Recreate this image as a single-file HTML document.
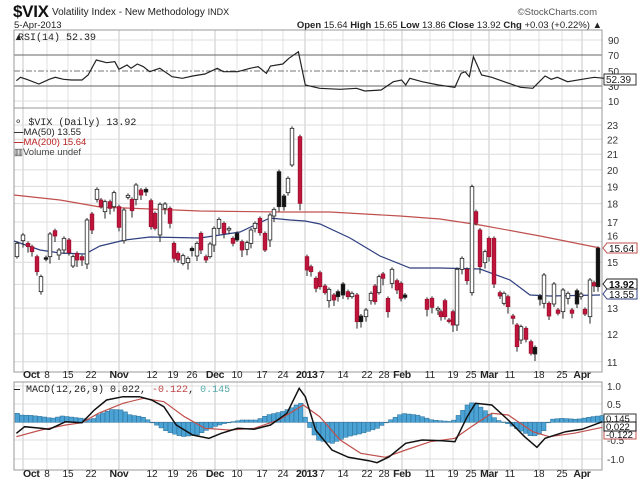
<!DOCTYPE html>
<html><head><meta charset="utf-8"><style>
html,body{margin:0;padding:0;background:#fff;width:640px;height:484px;overflow:hidden}
svg{display:block;font-family:"Liberation Sans",sans-serif}
</style></head><body>
<svg id="s" width="640" height="484" viewBox="0 0 640 484" xmlns="http://www.w3.org/2000/svg">
<text x="13" y="17" font-size="17" font-weight="bold" fill="#111" textLength="36">$VIX</text>
<text x="52" y="15" font-size="10" fill="#222">Volatility Index - New Methodology <tspan font-size="9">INDX</tspan></text>
<text x="597" y="15" font-size="9.5" fill="#555" text-anchor="end">©StockCharts.com</text>
<text x="14" y="28" font-size="9.5" fill="#222">5-Apr-2013</text>
<text x="602" y="28" font-size="9.5" fill="#222" text-anchor="end"><tspan font-weight="bold">Open</tspan> 15.64 <tspan font-weight="bold">High</tspan> 15.65 <tspan font-weight="bold">Low</tspan> 13.86 <tspan font-weight="bold">Close</tspan> 13.92 <tspan font-weight="bold">Chg</tspan> +0.03 (+0.22%) ▲</text>
<g id="grid"></g>
<g id="dyn"></g>
<text x="18" y="40" font-size="10" fill="#222" font-family="Liberation Mono, monospace">RSI(14) 52.39</text>
<text x="14" y="40" font-size="9" fill="#222">▲</text>
<text x="14" y="125" font-size="10" fill="#222" font-family="Liberation Mono, monospace">⚬ $VIX (Daily) 13.92</text>
<text x="14" y="135" font-size="9.5" fill="#222"><tspan font-weight="bold">—</tspan>MA(50) 13.55</text>
<text x="14" y="145" font-size="9.5" fill="#b22"><tspan font-weight="bold">—</tspan>MA(200) 15.64</text>
<text x="14" y="155" font-size="9.5" fill="#444">▥Volume undef</text>
<text x="14" y="392" font-size="10" fill="#222" font-family="Liberation Mono, monospace"><tspan font-weight="bold">—</tspan> MACD(12,26,9) 0.022, <tspan fill="#b44">-0.122</tspan>, <tspan fill="#5aa">0.145</tspan></text>
</svg>
<script>
var NS="http://www.w3.org/2000/svg";
var g=document.getElementById('grid'),d=document.getElementById('dyn');
function el(p,t,a,txt){var e=document.createElementNS(NS,t);for(var k in a)e.setAttribute(k,a[k]);if(txt!=null)e.textContent=txt;p.appendChild(e);return e;}
var L=14,R=602;
var panels=[[30,108],[108,372],[382,470]];
var dates=[[23,"Oct",1],[47,"8"],[68,"15"],[91,"22"],[119,"Nov",1],[152,"12"],[173,"19"],[192,"26"],[215,"Dec",1],[237,"10"],[262,"17"],[283,"24"],[305,"2013",1],[322,"7"],[343,"14"],[367,"22"],[384,"28"],[402,"Feb",1],[430,"11"],[453,"19"],[471,"25"],[489,"Mar",1],[510,"11"],[539,"18"],[562,"25"],[582,"Apr",1]];
panels.forEach(function(p){dates.forEach(function(dt){el(g,'line',{x1:dt[0],x2:dt[0],y1:p[0],y2:p[1],stroke:dt[2]?'#c8c8c8':'#e0e0e0','stroke-width':1});});});
[[40,"90"],[55,"70"],[71,"50"],[86,"30"],[101,"10"]].forEach(function(r){
 var dark=(r[1]=="70"||r[1]=="30");
 if(r[1]=="50")el(g,'line',{x1:L,x2:R,y1:r[0],y2:r[0],stroke:'#777','stroke-dasharray':'6,2,2,2'});
 else el(g,'line',{x1:L,x2:R,y1:r[0],y2:r[0],stroke:dark?'#666':'#ddd','stroke-width':1});
 el(g,'text',{x:608,y:r[0]+4,'font-size':10,fill:'#333'},r[1]);
});
function Y(v){return 125+321*Math.log(23/v);}
for(var v=11;v<=23;v++){var yy0=Y(v);el(g,'line',{x1:L,x2:R,y1:yy0,y2:yy0,stroke:'#dcdcdc'});if(v!=16&&v!=14)el(g,'text',{x:607,y:yy0+4,'font-size':10,fill:'#333'},""+v);}
el(g,'text',{x:607,y:Y(16)-2,'font-size':10,fill:'#333'},"16");
[[386,"1.0"],[404,"0.5"],[440,"-0.5"],[459,"-1.0"]].forEach(function(r){el(g,'line',{x1:L,x2:R,y1:r[0],y2:r[0],stroke:'#ddd'});el(g,'text',{x:607,y:r[0]+4,'font-size':10,fill:'#333'},r[1]);});
el(g,'line',{x1:L,x2:R,y1:422,y2:422,stroke:'#ddd'});
panels.forEach(function(p){el(g,'rect',{x:L,y:p[0],width:R-L,height:p[1]-p[0],fill:'none',stroke:'#999','stroke-width':1});});
[378,477].forEach(function(yy){dates.forEach(function(dt){el(g,'text',{x:dt[0],y:yy,'font-size':dt[2]?10.5:10,'font-weight':dt[2]?'bold':'normal',fill:'#222','text-anchor':(dt[0]<30?'start':'middle'),'letter-spacing':dt[2]?'-0.3':'0'},dt[1]=="2013"?"":dt[1]);});
 el(g,'text',{x:296,y:yy,'font-size':10.5,'font-weight':'bold',fill:'#222','letter-spacing':'-0.5'},"2013");});
var rz=[[40,242],[50,232],[65,238],[95,252],[120,238],[135,232],[155,238],[175,240],[200,240],[215,225],[235,180],[260,188],[280,185],[290,208],[310,195],[320,205],[335,192],[350,200],[365,215],[390,205],[420,230],[445,235],[470,228],[500,222],[530,205],[545,215],[580,215],[610,205],[630,200],[650,220],[660,198],[690,192],[705,175],[728,155],[745,255],[780,265],[830,268],[870,265],[890,273],[930,270],[960,245],[980,240],[990,255],[1000,235],[1030,245],[1070,255],[1110,262],[1125,220],[1135,215],[1145,230],[1155,170],[1175,225],[1200,232],[1230,245],[1270,262],[1300,265],[1330,228],[1345,238],[1360,232],[1385,245],[1420,238],[1450,232],[1475,235]];
el(d,'polyline',{points:rz.map(function(p){return (p[0]/2.44).toFixed(1)+","+(p[1]/3).toFixed(1)}).join(" "),fill:'none',stroke:'#222','stroke-width':1.2});
el(d,'rect',{x:604,y:74,width:32,height:11,fill:'#fff',stroke:'#333'});
el(d,'text',{x:606,y:83,'font-size':10,fill:'#222'},"52.39");
el(d,'polyline',{points:"14,195 60,200 100,207 150,209 200,211 280,212 330,212 400,216 440,219 480,225 540,236 600,248",fill:'none',stroke:'#c0504d','stroke-width':1.2});
el(d,'polyline',{points:"14,241 40,250 60,253 85,254 100,246 125,240 150,237 200,238 240,232 270,218 290,220 305,221 320,224 350,238 380,256 410,268 440,268 480,269 510,280 530,295 550,296 600,295",fill:'none',stroke:'#2f3f7f','stroke-width':1.2});
var A=[[17,400,440,'w'],[23,375,392,'w'],[28,400,410,'r'],[32,410,425,'r'],[37,440,485,'r'],[41,500,545,'w'],[46,443,448,'b'],[50,372,440,'w'],[55,362,378,'r'],[59,420,435,'w'],[64,385,420,'w'],[69,390,428,'r'],[73,440,468,'w'],[77,430,450,'r'],[82,440,450,'r'],[87,330,462,'w'],[92,312,360,'r'],[97,238,268,'w'],[101,270,290,'r'],[105,275,305,'w'],[110,275,295,'r'],[114,248,290,'w'],[119,290,352,'r'],[124,300,392,'w'],[128,256,262,'w'],[132,268,302,'r'],[136,225,268,'w'],[141,240,255,'r'],[146,238,246,'b'],[151,272,350,'r'],[155,310,355,'r'],[160,283,375,'w'],[165,282,295,'w'],[170,295,340,'r'],[174,400,445,'r'],[178,430,450,'r'],[183,437,460,'w'],[188,445,458,'w'],[192,415,422,'b'],[197,400,438,'w'],[201,370,420,'r'],[206,440,450,'r'],[210,402,440,'w'],[214,355,405,'w'],[219,328,355,'w'],[224,340,370,'r'],[229,355,360,'w'],[233,385,400,'r'],[237,370,390,'b'],[242,395,420,'r'],[247,398,418,'w'],[251,360,400,'w'],[255,340,355,'w'],[260,325,368,'r'],[265,370,420,'r'],[270,315,390,'w'],[274,298,318,'w'],[279,185,290,'b'],[284,258,290,'b'],[288,205,248,'w'],[292,55,165,'w'],[300,80,280,'r'],[307,440,480,'r'],[311,470,485,'r'],[316,505,535,'r'],
[320,488,530,'r'],[325,528,548,'r'],[329,538,572,'w'],[334,555,570,'r'],[338,545,560,'b'],[343,522,555,'b'],[348,545,560,'r'],[352,550,560,'w'],[357,555,635,'r'],[361,618,635,'b'],[366,600,620,'w'],[371,550,572,'w'],[375,528,575,'r'],[379,500,548,'w'],[383,492,505,'r'],[388,565,605,'r'],[392,478,520,'w'],[397,512,540,'r'],[401,520,565,'r'],[405,555,562,'b'],[427,568,598,'r'],[432,565,592,'r'],[438,595,600,'w'],[441,605,620,'r'],[445,572,620,'r'],[449,630,634,'r'],[453,605,645,'r'],[457,478,645,'w'],[462,445,478,'w'],[467,478,512,'r'],[472,230,548,'w'],[476,305,340,'r'],[480,360,470,'r'],[485,425,458,'w'],[489,385,440,'r'],[494,385,522,'r'],[500,548,558,'r'],[504,550,580,'w'],[508,560,590,'r'],[513,618,625,'r'],[517,645,710,'r'],[521,650,690,'w'],[526,655,688,'r'],[531,695,730,'r'],[535,712,732,'b'],[540,558,568,'b'],[544,495,580,'w'],[549,580,618,'r'],[554,522,582,'w'],[558,600,610,'r'],[563,540,605,'w'],[568,550,565,'w'],[572,600,610,'r'],[577,542,582,'b'],[581,552,560,'w'],[585,598,612,'r'],[590,510,620,'w'],[594,518,528,'r'],[598,415,530,'b']];
A.forEach(function(c,i){var y1=110+c[1]/3,y2=110+c[2]/3,e1=2+(i*7)%7,e2=2+(i*5)%6;
 el(d,'line',{x1:c[0],x2:c[0],y1:y1-e1,y2:y2+e2,stroke:'#222','stroke-width':1});
 var f=c[3]=='w'?'#fff':(c[3]=='r'?'#c0143c':'#111');
 el(d,'rect',{x:c[0]-1.8,y:y1,width:3.6,height:Math.max(1.5,y2-y1),fill:f,stroke:c[3]=='r'?'#a01030':'#222','stroke-width':0.8});});
function box(y,t,b,col){el(d,'path',{d:"M603 "+y+" l4 -5 h30 v10 h-30 z",fill:'#fff',stroke:col});el(d,'text',{x:609,y:y+4,'font-size':10,'font-weight':b?'bold':'normal',fill:'#111'},t);}
box(248,"15.64",0,'#c0504d');box(294,"13.55",0,'#2f3f7f');box(284,"13.92",1,'#222');
var H=[[14,128],[18,135],[28,136],[40,140],[50,145],[60,138],[80,145],[90,150],[95,135],[110,118],[120,120],[128,135],[140,140],[150,157],[165,185],[180,200],[195,195],[210,172],[225,158],[240,150],[255,150],[265,135],[280,125],[292,110],[298,95],[305,160],[315,210],[330,220],[345,200],[360,190],[375,175],[388,150],[400,130],[415,135],[430,150],[450,155],[458,130],[465,105],[472,95],[480,115],[495,150],[505,160],[520,185],[530,200],[540,190],[548,148],[560,145],[575,148],[590,140],[602,136]];
function hv(x){for(var i=1;i<H.length;i++){if(x<=H[i][0]){var a=H[i-1],b=H[i];return a[1]+(b[1]-a[1])*(x-a[0])/(b[0]-a[0]);}}return H[H.length-1][1];}
for(var hx=15;hx<601;hx+=4.5){var zy=hv(hx),ytop=370+Math.min(zy,157)/3,ybot=370+Math.max(zy,157)/3;el(d,'rect',{x:hx,y:ytop,width:4.5,height:Math.max(0.5,ybot-ytop),fill:'#4aa3d4',stroke:'#2a6d96','stroke-width':0.5});}
var sig=[[40,200],[100,180],[160,165],[200,158],[240,130],[300,100],[350,85],[400,95],[450,140],[500,175],[560,180],[620,175],[680,150],[740,105],[780,140],[830,210],[880,250],[940,262],[990,240],[1050,215],[1110,205],[1150,170],[1200,130],[1240,135],[1300,185],[1340,200],[1400,190],[1470,172]];
var mac=[[40,190],[60,170],[100,175],[120,178],[160,155],[200,158],[230,120],[260,90],[300,80],[340,80],[370,90],[400,110],[430,165],[470,195],[510,205],[540,190],[580,175],[620,178],[660,165],[700,130],[730,55],[745,80],[770,180],[810,240],[850,262],[900,272],[920,278],[950,260],[990,220],[1030,210],[1080,212],[1110,215],[1140,140],[1160,100],[1200,105],[1240,150],[1280,200],[1310,232],[1330,205],[1380,185],[1420,178],[1470,155]];
function pts(a){return a.map(function(p){return (p[0]/2.44).toFixed(1)+","+(370+p[1]/3).toFixed(1)}).join(" ");}
el(d,'polyline',{points:pts(sig),fill:'none',stroke:'#c0504d','stroke-width':1.2});
el(d,'polyline',{points:pts(mac),fill:'none',stroke:'#111','stroke-width':1.5});
el(d,'rect',{x:604,y:414,width:32,height:9,fill:'#fff',stroke:'#333'});el(d,'text',{x:606,y:422,'font-size':9.5,fill:'#111'},"0.145");
el(d,'rect',{x:604,y:430,width:32,height:9,fill:'#fff',stroke:'#c0504d'});el(d,'text',{x:606,y:438,'font-size':9.5,fill:'#111'},"-0.122");
el(d,'rect',{x:604,y:422,width:32,height:9,fill:'#fff',stroke:'#111'});el(d,'text',{x:606,y:430,'font-size':9.5,fill:'#111'},"0.022");
</script>
</body></html>
